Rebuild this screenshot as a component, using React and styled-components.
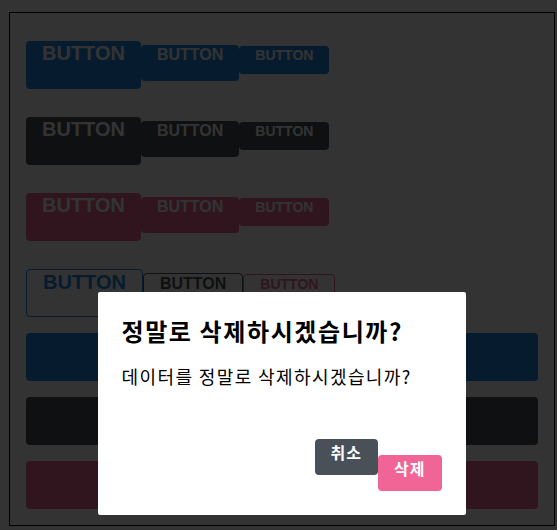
import styled, { css, createGlobalStyle } from "styled-components";

const palette = {
  blue: "#228be6",
  gray: "#495057",
  pink: "#f06595",
};

const sizes = {
  large: { height: "3rem", fontSize: "1.25rem" },
  medium: { height: "2.25rem", fontSize: "1rem" },
  small: { height: "1.75rem", fontSize: "0.875rem" },
};

const GlobalStyle = createGlobalStyle`
  body {
    margin: 0;
    background: white;
    font-family: "Liberation Sans", "Noto Sans CJK KR", sans-serif;
  }
`;

//#region buttons
const colorStyles = ({ $color = "blue", $outline }) => {
  const c = palette[$color];
  if ($outline) {
    return css`
      color: ${c};
      background: none;
      border: 1px solid ${c};
    `;
  }
  return css`
    color: white;
    background: ${c};
    border: none;
  `;
};

const sizeStyles = ({ $size = "medium" }) => css`
  height: ${sizes[$size].height};
  font-size: ${sizes[$size].fontSize};
`;

const fullWidthStyle = ({ $fullWidth }) =>
  $fullWidth &&
  css`
    width: 100%;
    justify-content: center;
    & + & {
      margin-top: 1rem;
    }
  `;

const Button = styled.button`
  display: inline-flex;
  box-sizing: border-box;
  outline: none;
  border-radius: 4px;
  font-family: "Liberation Sans", "Noto Sans CJK KR", sans-serif;
  font-weight: bold;
  line-height: normal;
  cursor: pointer;
  padding: 1px 1rem;
  margin: 0;
  ${sizeStyles}
  ${colorStyles}
  ${fullWidthStyle}
`;
//#endregion

//#region page
const AppBlock = styled.div`
  width: 512px;
  margin: 12px 0 0 9px;
  border: 1px solid black;
  padding: 1rem;
`;

const ButtonRow = styled.div`
  display: flex;
  align-items: baseline;
  & + & {
    margin-top: 1rem;
  }
`;

const FullGroup = styled.div`
  display: flex;
  flex-direction: column;
  margin-top: 1rem;
`;
//#endregion

//#region dialog
const Overlay = styled.div`
  position: fixed;
  inset: 0;
  box-sizing: border-box;
  padding: 292px 0 0 6px;
  background: rgba(0, 0, 0, 0.8);
  display: flex;
  justify-content: center;
  align-items: flex-start;
`;

const DialogBlock = styled.div`
  width: 320px;
  padding: 1.5rem;
  background: white;
  border-radius: 2px;
  font-family: "Noto Sans CJK KR", sans-serif;
`;

const Title = styled.h3`
  margin: 0;
  font-size: 1.5rem;
  line-height: 30px;
  letter-spacing: 1.6px;
  color: black;
`;

const Message = styled.p`
  margin: 17px 0 0;
  font-size: 1.125rem;
  line-height: 26px;
  letter-spacing: 1.4px;
  color: black;
`;

const DialogButtons = styled.div`
  margin-top: 50px;
  display: flex;
  justify-content: flex-end;
  align-items: flex-start;
`;

const ShortMarginButton = styled(Button)`
  letter-spacing: 1px;
  & + & {
    margin-top: 1rem;
  }
`;
//#endregion

function App() {
  const colors = ["blue", "gray", "pink"];
  return (
    <>
      <GlobalStyle />
      <AppBlock>
        {colors.map((c) => (
          <ButtonRow key={c}>
            <Button $color={c} $size="large">BUTTON</Button>
            <Button $color={c}>BUTTON</Button>
            <Button $color={c} $size="small">BUTTON</Button>
          </ButtonRow>
        ))}
        <ButtonRow>
          <Button $color="blue" $size="large" $outline>BUTTON</Button>
          <Button $color="gray" $outline>BUTTON</Button>
          <Button $color="pink" $size="small" $outline>BUTTON</Button>
        </ButtonRow>
        <FullGroup>
          {colors.map((c) => (
            <Button key={c} $color={c} $size="large" $fullWidth>BUTTON</Button>
          ))}
        </FullGroup>
      </AppBlock>
      <Overlay>
        <DialogBlock>
          <Title>정말로 삭제하시겠습니까?</Title>
          <Message>데이터를 정말로 삭제하시겠습니까?</Message>
          <DialogButtons>
            <ShortMarginButton $color="gray">취소</ShortMarginButton>
            <ShortMarginButton $color="pink">삭제</ShortMarginButton>
          </DialogButtons>
        </DialogBlock>
      </Overlay>
    </>
  );
}

export default App;
